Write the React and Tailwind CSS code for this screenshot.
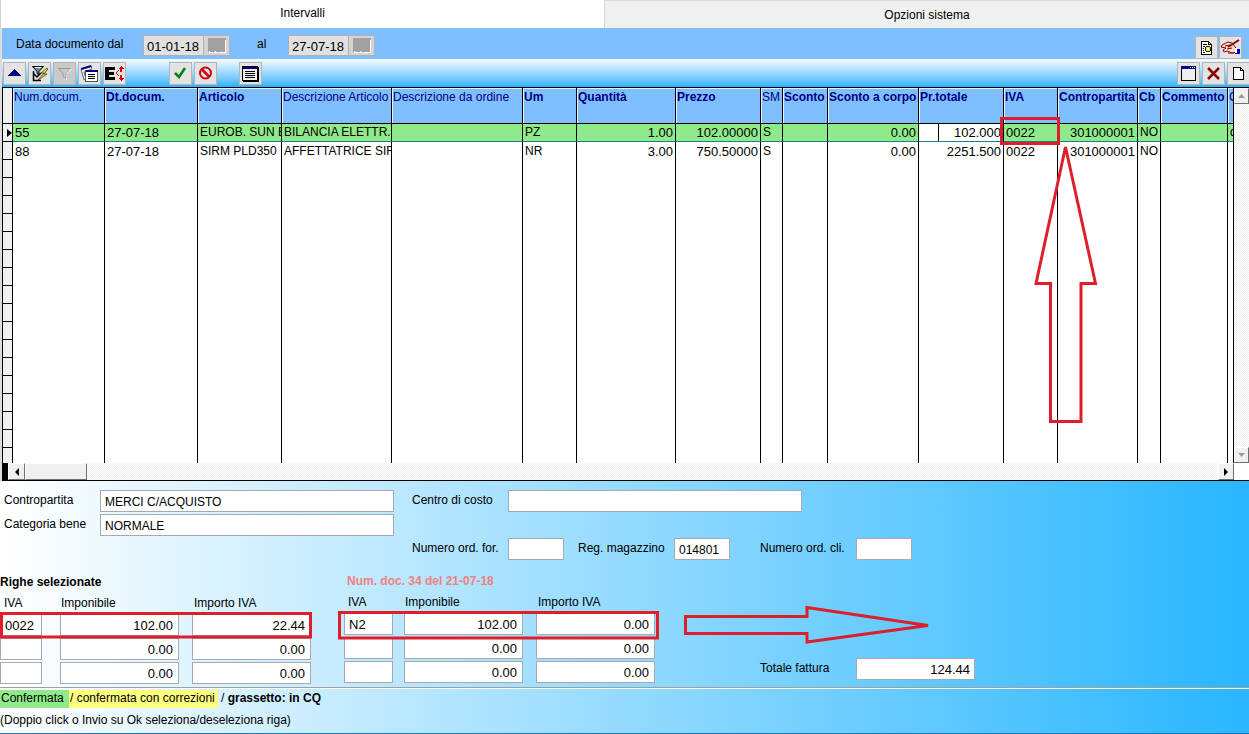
import { useState } from "react"

const columns = [
  { key: "num", label: "Num.docum.", width: "w-[92px]" },
  { key: "data", label: "Dt.docum.", width: "w-[93px]", bold: true },
  { key: "articolo", label: "Articolo", width: "w-[84px]", bold: true, text: true },
  { key: "descrizione", label: "Descrizione Articolo", width: "w-[110px]", text: true },
  { key: "ordine", label: "Descrizione da ordine", width: "w-[131px]" },
  { key: "um", label: "Um", width: "w-[54px]", bold: true, text: true },
  { key: "quantita", label: "Quantità", width: "w-[99px]", bold: true, right: true },
  { key: "prezzo", label: "Prezzo", width: "w-[85px]", bold: true, right: true },
  { key: "sm", label: "SM", width: "w-[22px]", text: true },
  { key: "sconto", label: "Sconto", width: "w-[45px]", bold: true },
  { key: "scontoCorpo", label: "Sconto a corpo", width: "w-[91px]", bold: true, right: true },
  { key: "totale", label: "Pr.totale", width: "w-[85px]", bold: true, right: true },
  { key: "iva", label: "IVA", width: "w-[54px]", bold: true },
  { key: "contropartita", label: "Contropartita", width: "w-[80px]", bold: true, right: true },
  { key: "cb", label: "Cb", width: "w-[23px]", bold: true, text: true },
  { key: "commento", label: "Commento", width: "w-[67px]", bold: true },
  { key: "extra", label: "C", width: "", text: true },
]

const righe = [
  { num: "55", data: "27-07-18", articolo: "EUROB. SUN B", descrizione: "BILANCIA ELETTR.E", um: "PZ", quantita: "1.00", prezzo: "102.00000", sm: "S", scontoCorpo: "0.00", totale: "102.000", iva: "0022", contropartita: "301000001", cb: "NO", extra: "d" },
  { num: "88", data: "27-07-18", articolo: "SIRM PLD350", descrizione: "AFFETTATRICE SIRM", um: "NR", quantita: "3.00", prezzo: "750.50000", sm: "S", scontoCorpo: "0.00", totale: "2251.500", iva: "0022", contropartita: "301000001", cb: "NO" },
]

const emptyRows = Array.from({ length: 40 }, (_, i) => i)

const track = "bg-[repeating-conic-gradient(#ffffff_0_25%,#efefef_0_50%)] bg-[length:2px_2px]"
const scrollButton = "flex items-center justify-center bg-[#f0f0f0] border border-t-white border-l-white border-r-[#707070] border-b-[#707070]"

function IconButton({ label, dim, children }) {
  return (
    <button
      type="button"
      aria-label={label}
      className={`flex h-[23px] w-[23px] shrink-0 items-center justify-center border border-[#b4b4b4] ${dim ? "bg-[#c9c9c9]" : "bg-[#e3e3e3]"}`}
    >
      <svg width="21" height="21" viewBox="0 0 21 21" fill="none" shapeRendering="crispEdges">
        {children}
      </svg>
    </button>
  )
}

function DateField({ id, value }) {
  const [data, setData] = useState(value)
  return (
    <div className="flex h-[21px]">
      <input id={id} value={data} onChange={(e) => setData(e.target.value)}
        className="w-[61px] border border-[#b0b0b0] bg-[#e1e1e1] px-[3px] pt-px text-[13px] leading-[19px] outline-none" />
      <button type="button" aria-label="Calendario" className="flex w-[26px] items-center justify-center border border-l-0 border-[#b0b0b0] bg-[#d4d4d4]">
        <svg width="20" height="17" viewBox="0 0 20 17" shapeRendering="crispEdges">
          <path d="M1 1H19V15H1Z" fill="#a0a0a0" />
          <path d="M18 3H19V16H12V15H18ZM2 14H3V15H6V16H2ZM7 15H8V14H9V15H11V16H7Z" fill="#fff" />
        </svg>
      </button>
    </div>
  )
}

function Field({ id, label, value = "", width, right }) {
  const [testo, setTesto] = useState(value)
  return (
    <div className="flex h-[22px] items-center">
      <label htmlFor={id} className="w-24 shrink-0 pb-[2px] whitespace-nowrap">{label}</label>
      <input id={id} value={testo} onChange={(e) => setTesto(e.target.value)}
        className={`h-[22px] border border-[#a4a9b4] bg-white px-1 pt-px outline-none ${width} ${right ? "text-right text-[13px]" : ""}`} />
    </div>
  )
}

function IvaTable({ title, titleClass, inputClass, rows }) {
  return (
    <table className="table-fixed">
      <caption className={`h-[18px] text-left font-bold leading-4 whitespace-nowrap ${titleClass}`}>{title}</caption>
      <thead>
        <tr className="h-[22px] text-left align-middle">
          <th className="w-[60px] pl-1 font-normal">IVA</th>
          <th className="w-[132px] pl-px font-normal">Imponibile</th>
          <th className="w-[119px] pl-[2px] font-normal">Importo IVA</th>
        </tr>
      </thead>
      <tbody>
        {rows.map((riga, i) => (
          <tr key={i} className="h-6">
            {riga.map((v, j) => (
              <td key={j} className="p-0 align-top">
                <input
                  defaultValue={v}
                  aria-label={`${["IVA", "Imponibile", "Importo IVA"][j]} riga ${i + 1}`}
                  className={`block h-[22px] border border-[#a4a9b4] bg-white pt-px text-[13px] outline-none ${j === 0 ? `pl-1 ${inputClass}` : "w-[119px] pr-[5px] text-right"}`}
                />
              </td>
            ))}
          </tr>
        ))}
      </tbody>
    </table>
  )
}

function Griglia() {
  return (
    <div className="min-w-0 flex-1 overflow-hidden">
      <table className="w-full table-fixed border-separate border-spacing-0">
        <thead>
          <tr className="h-9 text-left align-top text-[#00007f]">
            <th aria-label="Selettore" className="w-[11px] border-x border-b border-black bg-[#f0f0f0] p-0" />
            {columns.map((c) => (
              <th key={c.key}
                className={`overflow-hidden border-r border-b border-black bg-[#80bfff] p-0 pl-px pt-px whitespace-nowrap leading-4 shadow-[inset_1px_1px_0_#e4f2ff] ${c.width} ${c.bold ? "font-bold" : "font-normal"}`}>
                {c.label}
              </th>
            ))}
          </tr>
        </thead>
        <tbody>
          {righe.map((r, i) => (
            <tr key={r.num} className={`h-[18px] ${i === 0 ? "bg-[#90ea8b]" : "bg-white"}`}>
              <td className="border-x border-b border-black bg-[#f0f0f0] p-0">
                {i === 0 && (
                  <svg className="ml-1" width="5" height="8" viewBox="0 0 5 8"><path d="M0 0L5 4L0 8Z" fill="#000" /></svg>
                )}
              </td>
              {columns.map((c) => (
                <td key={c.key}
                  className={`overflow-hidden border-r border-r-black p-0 leading-[17px] whitespace-nowrap ${i === 0 ? "border-b border-b-[#16808c]" : ""} ${c.right ? "pr-[2px] text-right" : "pl-[2px]"} ${c.text ? "text-[12px]" : "text-[13px]"}`}>
                  {i === 0 && c.key === "totale" ? (
                    <div className="flex h-[17px] bg-white">
                      <span className="w-5 shrink-0 border-r border-black" />
                      <input defaultValue={r.totale} aria-label="Pr.totale" className="w-0 flex-1 text-right outline-none" />
                    </div>
                  ) : r[c.key]}
                </td>
              ))}
            </tr>
          ))}
          {emptyRows.map((i) => (
            <tr key={i} className="h-[18px]">
              <td className="border-x border-b border-black bg-[#f0f0f0] p-0" />
              {columns.map((c) => <td key={c.key} className="border-r border-black p-0" />)}
            </tr>
          ))}
        </tbody>
      </table>
    </div>
  )
}

export default function App() {
  const [tab, setTab] = useState("intervalli")

  return (
    <div className="relative flex h-screen flex-col overflow-hidden bg-white font-['Liberation_Sans',Arial,sans-serif] text-[12px] leading-4 text-black">
      {/* Schede */}
      <div role="tablist" className="flex h-7 shrink-0">
        <button role="tab" aria-selected={tab === "intervalli"} onClick={() => setTab("intervalli")}
          className="w-[604px] border-l border-[#d0d0d0] bg-white pb-[2px]">Intervalli</button>
        <button role="tab" aria-selected={tab === "opzioni"} onClick={() => setTab("opzioni")}
          className="flex-1 border-t border-l border-[#d9d9d9] bg-[#f0f0f0]">Opzioni sistema</button>
      </div>

      <div className="flex min-h-0 flex-1 flex-col border-l-2 border-[#dcdcdc]">
        {/* Filtro date */}
        <div className="flex h-[31px] shrink-0 items-center bg-[#80bfff]">
          <label htmlFor="dal" className="w-[141px] pt-px pl-[14px]">Data documento dal</label>
          <div className="pt-1"><DateField id="dal" value="01-01-18" /></div>
          <label htmlFor="al" className="w-[58px] pt-px pl-[27px]">al</label>
          <div className="pt-1"><DateField id="al" value="27-07-18" /></div>
          <div className="ml-auto flex gap-px pt-2 pr-[7px]">
            <IconButton label="Anteprima">
              <path d="M5.500 4.500H12.500L15.500 7.500V17.500H5.500Z" fill="#fff" stroke="#000" />
              <path d="M12.500 4.500V7.500H15.500M7 7.500H11M7 9.500H9M7 11.500H8M7 13.500H8M7 15.500H9" stroke="#000" />
              <path d="M10 9H14V10H15V14H14V15H10V14H9V10H10Z" fill="#222" />
              <path d="M10 10H14V14H10Z" fill="#f4e400" />
              <path d="M11 11H13V13H11Z" fill="#fff" />
            </IconButton>
            <IconButton label="Firma">
              <g shapeRendering="auto">
                <path d="M2 8L8 5L12 6L16 11V15L12 16L7 14L4 15L3 13L6 11L1 10Z" fill="#f6dfd2" stroke="#8b0000" />
                <path d="M5 9L10 8M7 12L12 11M8 16H14" stroke="#8b0000" />
                <path d="M8 10L19 3" stroke="#8b0000" strokeWidth="2" />
              </g>
              <path d="M15 12H20V17H15Z" fill="#0000c8" />
              <path d="M15 11H17V16H15Z" fill="#fff" />
            </IconButton>
          </div>
        </div>

        {/* Barra strumenti */}
        <div className="flex h-7 shrink-0 items-center gap-[2px] bg-linear-to-b from-[#f4fbff] to-[#1fb2ff] pl-px">
          <IconButton label="Su"><path d="M4 13L10.500 6L17 13Z" fill="#00007f" /></IconButton>
          <IconButton label="Filtro rapido">
            <g shapeRendering="auto">
              <path d="M3.500 3.500H14.500L10 8.500V12L8 10.500V8.500Z" fill="#5f8f9f" stroke="#000" />
              <path d="M6 4.500H12" stroke="#fff" />
              <path d="M4.500 8V17.500H12M5 11L8 14L12 10" stroke="#000" strokeWidth="1.500" />
              <path d="M18 5L12 10L15 10L9 17L18 11H15L19 6Z" fill="#f4e400" stroke="#222" strokeWidth=".7" />
            </g>
          </IconButton>
          <IconButton label="Filtro" dim>
            <g shapeRendering="auto">
              <path d="M5 6H18L13 11V17L10 15V11Z" fill="#fff" />
              <path d="M4.500 5.500H16.500L12 10.500V15.500L9 13.500V10.500Z" fill="#c9c9c9" stroke="#999" />
            </g>
          </IconButton>
          <IconButton label="Schede">
            <g shapeRendering="auto">
              <path d="M2 6L12 3L13 6L5 9L7 16L5 17Z" fill="#eee" stroke="#666" />
              <path d="M2 5L12 2L12.500 4L2.500 7Z" fill="#00007f" />
            </g>
            <path d="M6.500 7.500H18.500V18.500H6.500Z" fill="#fff" stroke="#555" />
            <path d="M7 7H19V9H7Z" fill="#00007f" />
            <path d="M9 11.500H16M9 13.500H16M9 15.500H16" stroke="#000" />
          </IconButton>
          <IconButton label="Esplodi">
            <path d="M1 4H11V7H5V9H10V12H5V14H11V17H1Z" fill="#000" />
            <path d="M12 9H13V11H12ZM13 8H14V9H13ZM14 7H15V8H14ZM13 11H14V12H13ZM14 12H15V13H14Z" fill="#e00000" />
            <path d="M17 3L20 6H18V9H16V6H14ZM17 18L20 15H18V12H16V15H14Z" fill="#e00000" />
          </IconButton>
          <div className="w-[39px]" />
          <IconButton label="Conferma"><path d="M5 10L9 14L15 5" stroke="#078007" strokeWidth="2.500" shapeRendering="auto" /></IconButton>
          <IconButton label="Annulla">
            <g shapeRendering="auto" stroke="#d00010" strokeWidth="2"><circle cx="10.500" cy="10" r="5.500" /><path d="M6.500 6L14.500 14" strokeWidth="2.500" /></g>
          </IconButton>
          <div className="w-[18px]" />
          <IconButton label="Elenco">
            <path d="M2.500 3.500H17.500V17.500H2.500Z" fill="#eee" stroke="#000" />
            <path d="M17 4H19V19H3V17H17Z" fill="#000" />
            <path d="M3 4H17V6H3Z" fill="#00007f" />
            <path d="M5 8.500H15M5 10.500H15M5 12.500H15M5 14.500H15" stroke="#000" />
          </IconButton>
          <div className="-mr-px ml-auto flex gap-[2px]">
            <IconButton label="Finestra">
              <path d="M3.500 3.500H17.500V17.500H3.500Z" fill="#eee" stroke="#000" />
              <path d="M3 3H18V6H3Z" fill="#00007f" />
              <path d="M12 4.500H17" stroke="#fff" strokeDasharray="1 1" />
            </IconButton>
            <IconButton label="Elimina"><path d="M5 5L16 16M16 5L5 16" stroke="#8b0000" strokeWidth="2.500" shapeRendering="auto" /></IconButton>
            <IconButton label="Nuovo">
              <path d="M5.500 4.500H12.500L15.500 7.500V16.500H5.500Z" fill="#fff" stroke="#000" />
              <path d="M12.500 4.500V7.500H15.500" stroke="#000" />
            </IconButton>
          </div>
        </div>

        {/* Griglia documenti */}
        <div className="flex min-h-0 flex-1 border-t border-black">
          <Griglia />
          <div className={`flex w-[15px] shrink-0 flex-col justify-between ${track}`}>
            <button type="button" aria-label="Scorri su" className={`h-4 ${scrollButton}`}>
              <svg width="7" height="4"><path d="M0 4L3.500 0L7 4Z" fill="#999" /></svg>
            </button>
            <button type="button" aria-label="Scorri giù" className={`h-4 ${scrollButton}`}>
              <svg width="7" height="4"><path d="M0 0H7L3.500 4Z" fill="#999" /></svg>
            </button>
          </div>
        </div>
        <div className="flex h-[18px] shrink-0 border-b border-black">
          <div className="w-[6px] bg-black" />
          <div className={`flex flex-1 ${track}`}>
            <button type="button" aria-label="Scorri a sinistra" className={`w-[17px] ${scrollButton}`}>
              <svg width="4" height="8"><path d="M4 0V8L0 4Z" fill="#000" /></svg>
            </button>
            <div className={`w-[62px] ${scrollButton}`} />
            <button type="button" aria-label="Scorri a destra" className={`ml-auto w-4 ${scrollButton}`}>
              <svg width="4" height="8"><path d="M0 0V8L4 4Z" fill="#000" /></svg>
            </button>
          </div>
          <div className="w-[15px] bg-white" />
        </div>
      </div>

      {/* Dettaglio */}
      <div className="shrink-0 border-b border-[#1a78b8] bg-linear-to-r/srgb from-white to-[#29b6ff]">
        <div className="flex gap-[18px] pt-[9px] pl-1">
          <div className="flex flex-col gap-[2px]">
            <Field id="contropartita" label="Contropartita" value="MERCI C/ACQUISTO" width="w-[294px]" />
            <Field id="categoria" label="Categoria bene" value="NORMALE" width="w-[294px]" />
          </div>
          <div className="flex flex-col gap-[26px]">
            <Field id="centro" label="Centro di costo" width="w-[294px]" />
            <div className="flex">
              <Field id="ordfor" label="Numero ord. for." width="w-14" />
              <div className="pl-[14px]"><Field id="magazzino" label="Reg. magazzino" value="014801" width="w-14" /></div>
              <div className="pl-[30px]"><Field id="ordcli" label="Numero ord. cli." width="w-14" /></div>
            </div>
          </div>
        </div>

        <div className="flex items-start pt-3 pb-px">
          <div className="w-[344px] pt-[2px]">
            <IvaTable title="Righe selezionate" titleClass="" inputClass="w-[42px]"
              rows={[["0022", "102.00", "22.44"], ["", "0.00", "0.00"], ["", "0.00", "0.00"]]} />
          </div>
          <div className="w-[416px] pt-px">
            <IvaTable title="Num. doc. 34 del 21-07-18" titleClass="pl-[3px] text-[#f08080]" inputClass="w-[49px]"
              rows={[["N2", "102.00", "0.00"], ["", "0.00", "0.00"], ["", "0.00", "0.00"]]} />
          </div>
          <div className="self-end pb-[6px]">
            <Field id="totale" label="Totale fattura" value="124.44" width="w-[119px]" right />
          </div>
        </div>

        <div className="border-t border-[#a0a0a0]">
          <div className="h-[45px] border-t border-white pt-px">
            <p className="flex h-[18px] leading-[17px] whitespace-nowrap">
              <span className="w-[69px] bg-[#90ea8b] pl-px">Confermata</span>
              <span className="w-[149px] bg-[#ffff80] pl-px">/ confermata con correzioni</span>
              <span className="pl-[3px]">/ <b>grassetto: in CQ</b></span>
            </p>
            <p className="pt-1 leading-[17px]">(Doppio click o Invio su Ok seleziona/deseleziona riga)</p>
          </div>
        </div>
      </div>

      {/* Evidenziazioni */}
      <svg className="pointer-events-none absolute top-0 left-0" width="1249" height="734" viewBox="0 0 1249 734" fill="none" stroke="#dc1f2b" strokeWidth="3">
        <path d="M1001.500 118.500H1058.500V143.500H1001.500Z" />
        <path d="M1065.500 147L1036 283.500H1050.500V421.500H1081V283.500H1095.500Z" />
        <path d="M1.500 613.500H310.500V637H1.500Z" />
        <path d="M339.500 612.500H657.500V638H339.500Z" />
        <path d="M685.500 616.500H807V607.500L928 625.500L807 642V633.500H685.500Z" />
      </svg>
    </div>
  )
}
